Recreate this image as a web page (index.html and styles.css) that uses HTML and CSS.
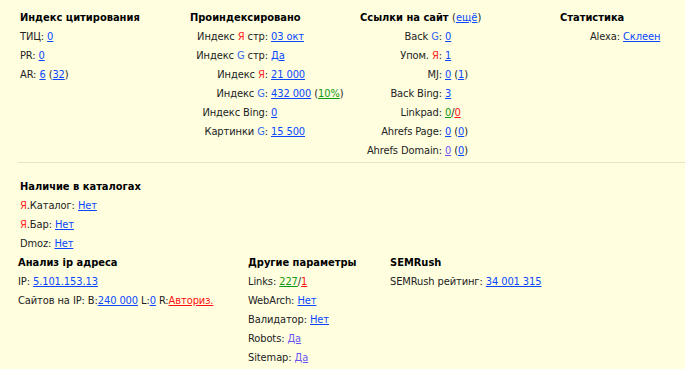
FILE: index.html
```
<!DOCTYPE html>
<html lang="ru">
<head>
<meta charset="utf-8">
<link rel="stylesheet" href="styles.css">
</head>
<body>
<div class="top">
  <div class="col c1">
    <div class="h">Индекс цитирования</div>
    <div class="r">ТИЦ: <a href="#">0</a></div>
    <div class="r">PR: <a href="#">0</a></div>
    <div class="r">AR: <a href="#">6</a> (<a href="#">32</a>)</div>
  </div>
  <div class="col c2">
    <div class="h">Проиндексировано</div>
    <div class="kv">
      <span class="k">Индекс <span class="ya">Я</span> стр:</span><span><a href="#">03 окт</a></span>
      <span class="k">Индекс <span class="g">G</span> стр:</span><span><a href="#">Да</a></span>
      <span class="k">Индекс <span class="ya">Я</span>:</span><span><a href="#">21 000</a></span>
      <span class="k">Индекс <span class="g">G</span>:</span><span><a href="#">432 000</a> (<a class="green" href="#">10%</a>)</span>
      <span class="k">Индекс Bing:</span><span><a href="#">0</a></span>
      <span class="k">Картинки <span class="g">G</span>:</span><span><a href="#">15 500</a></span>
    </div>
  </div>
  <div class="col c3">
    <div class="h">Ссылки на сайт <span class="n">(<a href="#">ещё</a>)</span></div>
    <div class="kv">
      <span class="k">Back <span class="g">G</span>:</span><span><a href="#">0</a></span>
      <span class="k">Упом. <span class="ya">Я</span>:</span><span><a href="#">1</a></span>
      <span class="k">MJ:</span><span><a href="#">0</a> (<a href="#">1</a>)</span>
      <span class="k">Back Bing:</span><span><a href="#">3</a></span>
      <span class="k">Linkpad:</span><span><a class="green" href="#">0</a>/<a class="red" href="#">0</a></span>
      <span class="k">Ahrefs Page:</span><span><a href="#">0</a> (<a href="#">0</a>)</span>
      <span class="k">Ahrefs Domain:</span><span><a class="visited" href="#">0</a> (<a href="#">0</a>)</span>
    </div>
  </div>
  <div class="col c4">
    <div class="h">Статистика</div>
    <div class="kv">
      <span class="k">Alexa:</span><span><a href="#">Склеен</a></span>
    </div>
  </div>
</div>
<div class="sep"></div>
<div class="cat">
  <div class="h">Наличие в каталогах</div>
  <div class="r"><span class="ya">Я</span>.Каталог: <a href="#">Нет</a></div>
  <div class="r"><span class="ya">Я</span>.Бар: <a href="#">Нет</a></div>
  <div class="r">Dmoz: <a href="#">Нет</a></div>
</div>
<div class="bottom">
  <div class="col b1">
    <div class="h">Анализ ip адреса</div>
    <div class="r">IP: <a href="#">5.101.153.13</a></div>
    <div class="r">Сайтов на IP: B:<a href="#">240 000</a> L:<a href="#">0</a> R:<a class="red" href="#">Авториз.</a></div>
  </div>
  <div class="col b2">
    <div class="h">Другие параметры</div>
    <div class="r">Links: <a class="green" href="#">227</a>/<a class="red" href="#">1</a></div>
    <div class="r">WebArch: <a href="#">Нет</a></div>
    <div class="r">Валидатор: <a href="#">Нет</a></div>
    <div class="r">Robots: <a class="visited" href="#">Да</a></div>
    <div class="r">Sitemap: <a class="visited" href="#">Да</a></div>
  </div>
  <div class="col b3">
    <div class="h">SEMRush</div>
    <div class="r">SEMRush рейтинг: <a href="#">34 001 315</a></div>
  </div>
</div>
</body>
</html>
```
FILE: styles.css
```
html, body {
  margin: 0;
  padding: 0;
}
body {
  background: #ffffe0;
  color: #222;
  font-family: "DejaVu Sans Condensed", "DejaVu Sans", sans-serif;
  font-size: 11px;
  line-height: 19px;
  letter-spacing: -0.1px;
  width: 685px;
  height: 369px;
  overflow: hidden;
}
a {
  color: #0a47ff;
  text-decoration: underline;
}
a.green { color: #119911; }
a.red { color: #ff1111; }
a.visited { color: #6a55f0; }
.ya { color: #ff2222; }
.g { color: #3366ee; }
.h {
  font-weight: bold;
  color: #000;
  letter-spacing: 0;
}
.h .n { font-weight: normal; color: #222; }
.top {
  display: flex;
  padding-top: 8px;
  height: 152px;
}
.col { flex: none; }
.c1 { width: 170px; padding-left: 20px; }
.c2 { width: 170px; }
.c3 { width: 200px; }
.c4 { flex: 1; }
.kv {
  display: grid;
  column-gap: 3px;
  justify-items: start;
}
.kv .k { justify-self: end; }
.c2 .kv { grid-template-columns: 78px auto; }
.c3 .kv { grid-template-columns: 82px auto; }
.c4 .kv { grid-template-columns: 60px auto; }
.sep {
  margin: 2px 0 0 18px;
  height: 1px;
  background: #e4e4cc;
}
.cat {
  padding: 14px 0 0 20px;
}
.bottom {
  display: flex;
  padding-left: 18px;
}
.b1 { width: 230px; }
.b2 { width: 142px; }
```
